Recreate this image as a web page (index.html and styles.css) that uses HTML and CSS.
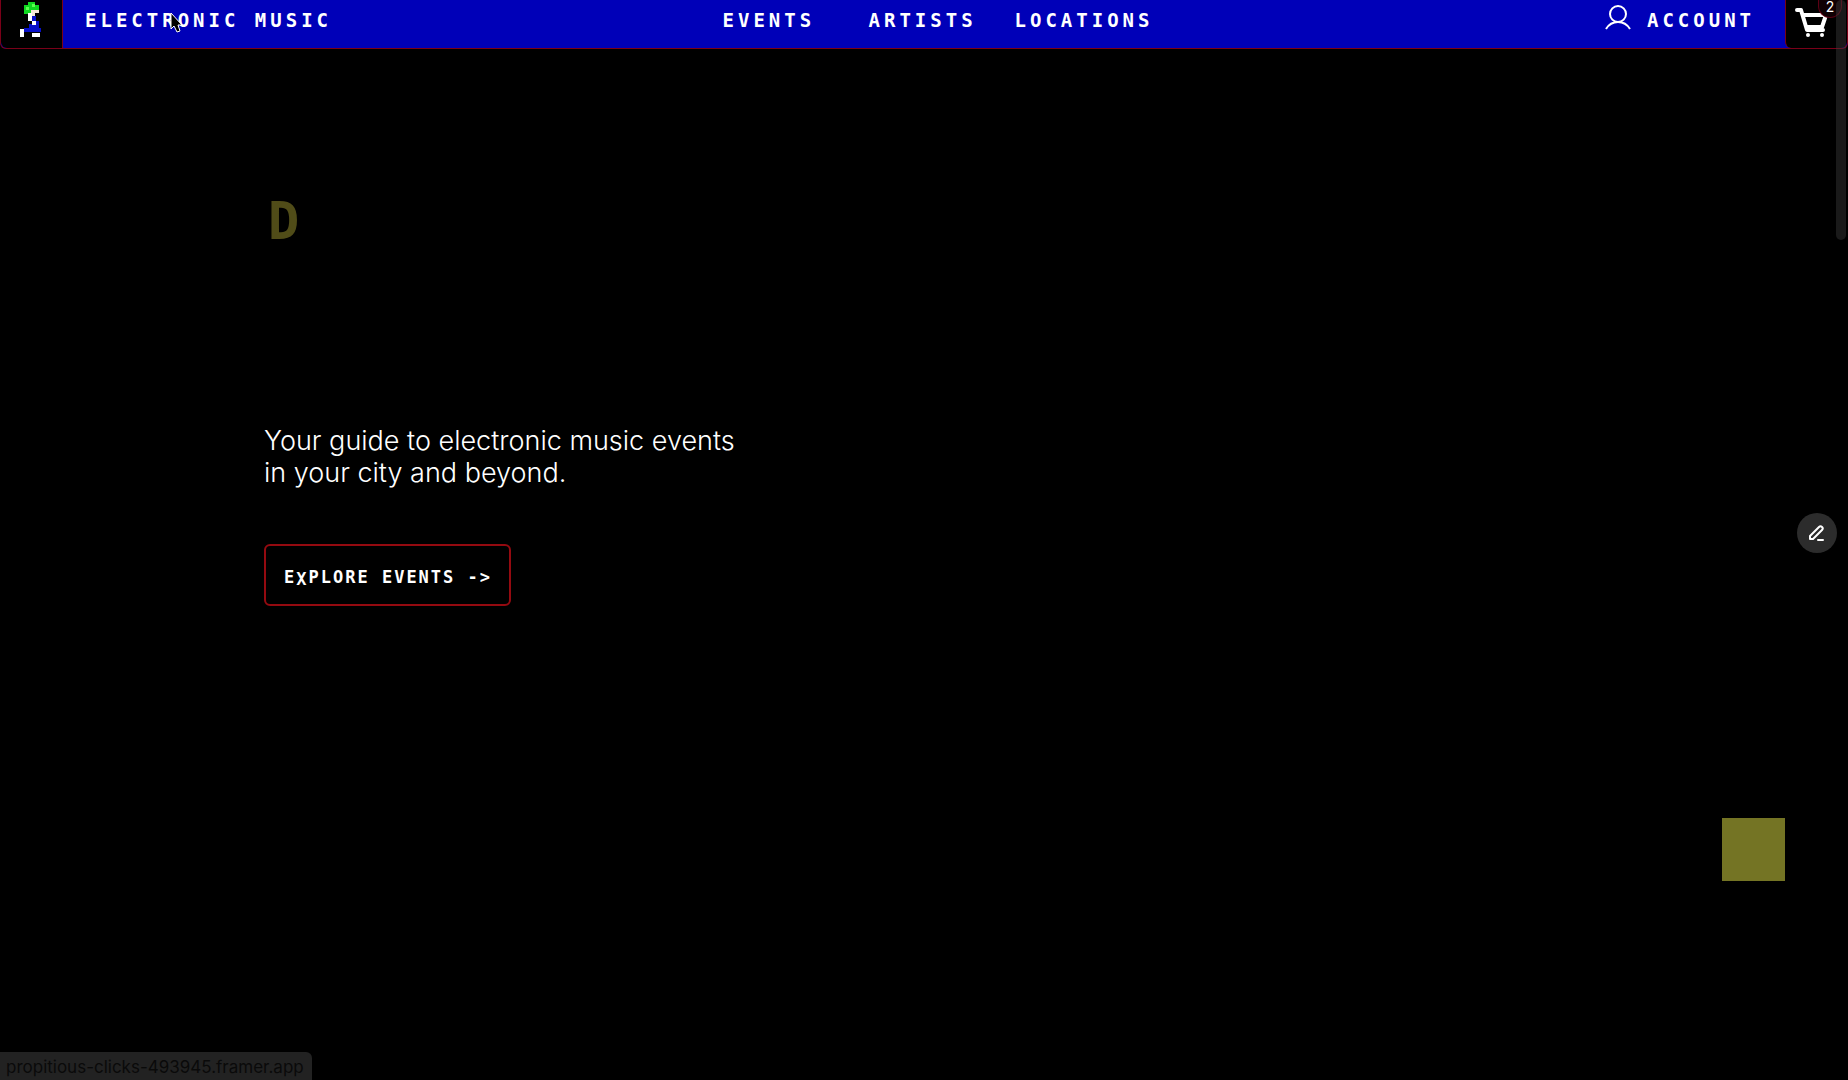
FILE: index.html
```html
<!DOCTYPE html>
<html lang="en">
  <head>
    <meta charset="utf-8">
    <title>Electronic Music</title>
    <link rel="stylesheet" href="styles.css">
  </head>
  <body>
    <header class="topbar">
      <a class="logo" href="#" aria-label="Home">
        <svg width="22" height="37" viewBox="0 0 22 37" shape-rendering="crispEdges">
          <path fill="#10d820" d="M9 2h7v3h4v6h-6v3H5V5h4z"/>
          <path fill="#5cff50" d="M13 4h3v3h-3zM7 7h3v3H7z"/>
          <path fill="#f4e8d8" d="M12 10h8v3h-4v3h-3v5h-4v-8h3z"/>
          <path fill="#0810c8" d="M13 16h4v5h3v7h2v4H5v-4h5v-4h3z"/>
          <path fill="#fff" d="M9 13h4v8H9zM13 21h4v4h-4zM1 29h4v8H1zM13 33h8v4h-8z"/>
        </svg>
      </a>
      <a class="brand" href="#">ELECTRONIC MUSIC</a>
      <nav class="menu">
        <a href="#">EVENTS</a>
        <a href="#">ARTISTS</a>
        <a href="#">LOCATIONS</a>
      </nav>
      <a class="account" href="#">
        <svg width="26" height="26" viewBox="0 0 26 26" fill="none" stroke="#fff" stroke-width="2">
          <circle cx="13" cy="9" r="8"/>
          <path d="M1 24C4 19 8 17 13 17s9 2 12 7"/>
        </svg>
        ACCOUNT
      </a>
      <button class="cart" aria-label="Cart">
        <svg width="34" height="32" viewBox="0 0 34 32" fill="none" stroke="#fff" stroke-width="4" stroke-linejoin="round" stroke-linecap="round">
          <path d="M2 4h4l6 20h16M8 9h23l-4 12H12"/>
          <circle cx="13" cy="29" r="2" fill="#fff" stroke="none"/>
          <circle cx="27" cy="29" r="2" fill="#fff" stroke="none"/>
        </svg>
        <span class="count">2</span>
      </button>
    </header>

    <main class="hero">
      <h1>D</h1>
      <p>Your guide to electronic music events<br>in your city and beyond.</p>
      <button class="explore">E<span class="drop">X</span>PLORE EVENTS -&gt;</button>
      <div class="block"></div>
    </main>

    <button class="edit" aria-label="Edit">
      <svg width="16" height="16" viewBox="0 0 16 16" fill="none" stroke="#fff" stroke-width="2" stroke-linejoin="round" stroke-linecap="round">
        <path d="M1 11L10 2c1-1 2-1 3 0s1 2 0 3L4 14H1zM9 15h5"/>
      </svg>
    </button>
    <div class="scrollbar"></div>
    <div class="status">propitious-clicks-493945.framer.app</div>
    <svg class="cursor" width="14" height="22" viewBox="0 0 14 22">
      <path d="M1 1v16l3-3 3 6 3-1-2-6h4z" fill="#000" stroke="#fff" stroke-width="1"/>
    </svg>
  </body>
</html>
```

FILE: styles.css
```css
* { box-sizing: border-box; }
body { margin: 0; min-height: 100vh; overflow-x: hidden; background: #000; color: #fff; font-family: Inter, sans-serif; }
a { color: inherit; text-decoration: none; }
button { margin: 0; padding: 0; color: inherit; cursor: pointer; }

.topbar { display: flex; align-items: flex-start; height: 49px; background: #0000b8; border: 1px solid #7a0018; border-top: none; border-radius: 0 0 6px 6px; }
.topbar, .explore, h1 { font-family: "DejaVu Sans Mono", monospace; font-weight: bold; }
.topbar { font-size: 19px; line-height: 40px; letter-spacing: 4px; }

.logo { width: 62px; height: 48px; padding-left: 18px; background: #000; border-right: 1px solid #7a0018; border-radius: 0 0 0 6px; line-height: 0; }
.brand { flex: 1; padding-left: 22px; }
.menu { display: flex; gap: 34px; padding-left: 36px; }
.menu a { min-width: 112px; }
.account { flex: 1; display: flex; gap: 16px; justify-content: flex-end; padding-right: 30px; }
.account svg { margin-top: 5px; }

.cart { position: relative; width: 62px; height: 48px; padding: 0 0 4px 9px; background: #000; border: none; border-left: 1px solid #7a0018; border-radius: 0 0 6px 6px; text-align: left; line-height: 0; }
.count { position: absolute; top: 0; right: 5px; width: 24px; height: 18px; border: 1px solid #5c0014; border-top: none; border-radius: 0 0 12px 12px; background: #100004; font: 14px/14px Inter, sans-serif; letter-spacing: 0; text-align: center; }

.hero { display: flex; flex-direction: column; align-items: flex-start; padding: 140px 63px 0 264px; }
h1 { margin: 0 0 172px 4px; font-size: 52px; line-height: 64px; color: #504c18; }
p { margin: 0; font-size: 27px; font-weight: 300; line-height: 32px; }
.explore { margin-top: 55px; padding: 5px 17px 0 18px; height: 62px; background: #000; border: 2px solid #940a10; border-radius: 6px; font-size: 17px; letter-spacing: 2px; }
.drop { vertical-align: -2px; }
.block { align-self: flex-end; width: 63px; height: 63px; margin-top: 212px; background: #747424; }

.edit { position: fixed; right: 11px; top: 513px; display: flex; align-items: center; justify-content: center; width: 40px; height: 40px; background: #2c2c2c; border: none; border-radius: 50%; }
.scrollbar { position: fixed; top: 0; right: 2px; width: 10px; height: 240px; border-radius: 5px; background: rgba(64, 64, 64, 0.4); }
.status { position: fixed; left: 0; bottom: 0; padding: 3px 8px 0 6px; background: #222; border-radius: 0 6px 0 0; color: #0a0a0a; font-size: 17px; line-height: 25px; }
.cursor { position: fixed; left: 170px; top: 12px; }
```
